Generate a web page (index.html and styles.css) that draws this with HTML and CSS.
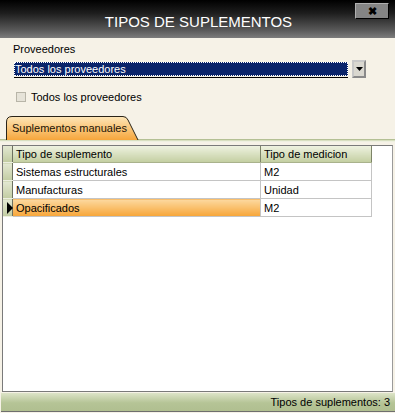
FILE: index.html
```html
<!DOCTYPE html>
<html lang="es">
<head>
    <meta charset="UTF-8">
    <title>Tipos de suplementos</title>
    <link rel="stylesheet" href="styles.css">
</head>
<body>
    <div class="window">
        <div class="titlebar">
            <span class="title">TIPOS DE SUPLEMENTOS</span>
            <button class="close-btn">&#x2716;</button>
        </div>

        <div class="filters">
            <div class="field-label">Proveedores</div>
            <div class="combo-row">
                <div class="combo">
                    <span class="combo-value">Todos los proveedores</span>
                </div>
                <button class="combo-btn">
                    <svg width="7" height="4" viewBox="0 0 7 4"><path d="M0 0H7L3.5 4Z" fill="#000"/></svg>
                </button>
            </div>
            <label class="check-row">
                <span class="checkbox"></span>
                <span>Todos los proveedores</span>
            </label>
        </div>

        <div class="tabstrip">
            <div class="tab">
                <svg class="tab-shape" width="133" height="24" viewBox="0 0 133 24">
                    <defs>
                        <linearGradient id="tabgrad" x1="0" y1="0" x2="0" y2="1">
                            <stop offset="0" stop-color="#fde6b8"/>
                            <stop offset="1" stop-color="#f6a63c"/>
                        </linearGradient>
                    </defs>
                    <path d="M0.5 24V6Q0.5 0.5 6 0.5H117Q120.5 0.5 122 4L132 24" fill="url(#tabgrad)" stroke="#2a2418"/>
                </svg>
                <span class="tab-text">Suplementos manuales</span>
            </div>
        </div>

        <div class="grid">
            <table>
                <thead>
                    <tr>
                        <th class="rowhead"></th>
                        <th class="col-tipo">Tipo de suplemento</th>
                        <th class="col-med">Tipo de medicion</th>
                    </tr>
                </thead>
                <tbody>
                    <tr>
                        <td class="rowhead"></td>
                        <td>Sistemas estructurales</td>
                        <td>M2</td>
                    </tr>
                    <tr>
                        <td class="rowhead"></td>
                        <td>Manufacturas</td>
                        <td>Unidad</td>
                    </tr>
                    <tr class="selected">
                        <td class="rowhead"><span class="arrow"></span></td>
                        <td>Opacificados</td>
                        <td>M2</td>
                    </tr>
                </tbody>
            </table>
        </div>

        <div class="statusbar">Tipos de suplementos: 3</div>
    </div>
</body>
</html>
```

FILE: styles.css
```css
body {
    margin: 0;
    font-family: "Liberation Sans", Arial, sans-serif;
    font-size: 11px;
    color: #000;
}
.window {
    width: 395px;
    height: 413px;
    display: flex;
    flex-direction: column;
    background-color: #f6f2e7;
    box-sizing: border-box;
}
.titlebar {
    position: relative;
    height: 38px;
    flex-shrink: 0;
    display: flex;
    justify-content: center;
    align-items: center;
    background: linear-gradient(#000 0%, #1e1e1e 35%, #5a5a5a 80%, #7c7c7c 100%);
}
.title {
    color: #fff;
    font-size: 15px;
    padding-top: 4px;
    padding-left: 2px;
}
.close-btn {
    position: absolute;
    top: 3px;
    right: 6px;
    width: 34px;
    height: 16px;
    padding: 0;
    border: 1px solid #000;
    border-top-color: #b0b0b0;
    border-left-color: #b0b0b0;
    background-color: #858585;
    color: #000;
    font-size: 11px;
    font-weight: bold;
    line-height: 14px;
}
.filters {
    padding: 3px 0 0 13px;
}
.field-label {
    height: 14px;
    line-height: 14px;
    margin-top: 1px;
}
.combo-row {
    display: flex;
    align-items: flex-start;
    margin-top: 4px;
    margin-left: 1px;
}
.combo {
    width: 334px;
    height: 18px;
    box-sizing: border-box;
    padding-top: 2px;
    border-bottom: 1px solid #000;
}
.combo-value {
    display: block;
    height: 14px;
    line-height: 14px;
    background-color: #0a246a;
    color: #fff;
    outline: 1px dotted #fff;
    outline-offset: -1px;
    padding-left: 1px;
}
.combo-btn {
    width: 14px;
    height: 18px;
    margin-left: 4px;
    padding: 0;
    box-sizing: border-box;
    border: 2px solid #8a8a8a;
    border-left-color: #c8c8c8;
    border-top-color: #c8c8c8;
    background-color: #dad8d0;
    display: flex;
    justify-content: center;
    align-items: center;
}
.check-row {
    display: flex;
    align-items: center;
    margin-top: 12px;
    margin-left: 3px;
    height: 13px;
}
.checkbox {
    width: 8px;
    height: 8px;
    border: 1px solid #b8b5a8;
    background-color: #e6e3d8;
    margin-right: 5px;
}
.tabstrip {
    margin-top: 13px;
    padding-left: 6px;
    height: 23px;
    border-bottom: 1px solid #b4c094;
    box-shadow: 0 1px 0 #d8dfc0, 0 2px 0 #eef0e0;
}
.tab {
    position: relative;
    width: 133px;
    height: 24px;
}
.tab-shape {
    position: absolute;
    left: 0;
    top: 0;
}
.tab-text {
    position: relative;
    display: block;
    padding: 5px 0 0 6px;
    line-height: 14px;
    color: #1a1408;
}
.grid {
    flex: 1;
    margin: 5px 2px 0 2px;
    border: 1px solid #7a7a7a;
    border-right-color: #9a9a9a;
    background-color: #fff;
}
table {
    border-collapse: collapse;
    table-layout: fixed;
}
th, td {
    height: 17px;
    padding: 0 0 0 3px;
    text-align: left;
    font-weight: normal;
    white-space: nowrap;
    border-right: 1px solid #c4c4c4;
    border-bottom: 1px solid #c4c4c4;
}
th {
    height: 16px;
    background: linear-gradient(#eef2e0, #c4cfa2);
    border-right: 1px solid #7d8468;
    border-bottom: 1px solid #a9b28c;
}
.rowhead {
    width: 6px;
    padding: 0 0 0 3px;
    background: linear-gradient(#e3e8d2, #c2cca2);
    border-right: 1px solid #6c7060;
    border-bottom: 1px solid #eceedf;
}
.col-tipo {
    width: 244px;
}
.col-med {
    width: 107px;
}
.selected td {
    background: linear-gradient(#fcd9a0, #f7a537);
}
.selected td.rowhead {
    background: linear-gradient(#e3e8d2, #c2cca2);
    position: relative;
}
.selected td:last-child {
    background: #fff;
}
.arrow {
    position: absolute;
    left: 4px;
    top: 3px;
    width: 0;
    height: 0;
    border-top: 6px solid transparent;
    border-bottom: 6px solid transparent;
    border-left: 6px solid #000;
}
.statusbar {
    height: 18px;
    flex-shrink: 0;
    margin: 1px 0 1px 1px;
    padding-right: 5px;
    line-height: 19px;
    text-align: right;
    background: linear-gradient(#dde4c8, #b5c496 55%, #b0bf90);
    border-bottom: 1px solid #6f6f6f;
}
```
